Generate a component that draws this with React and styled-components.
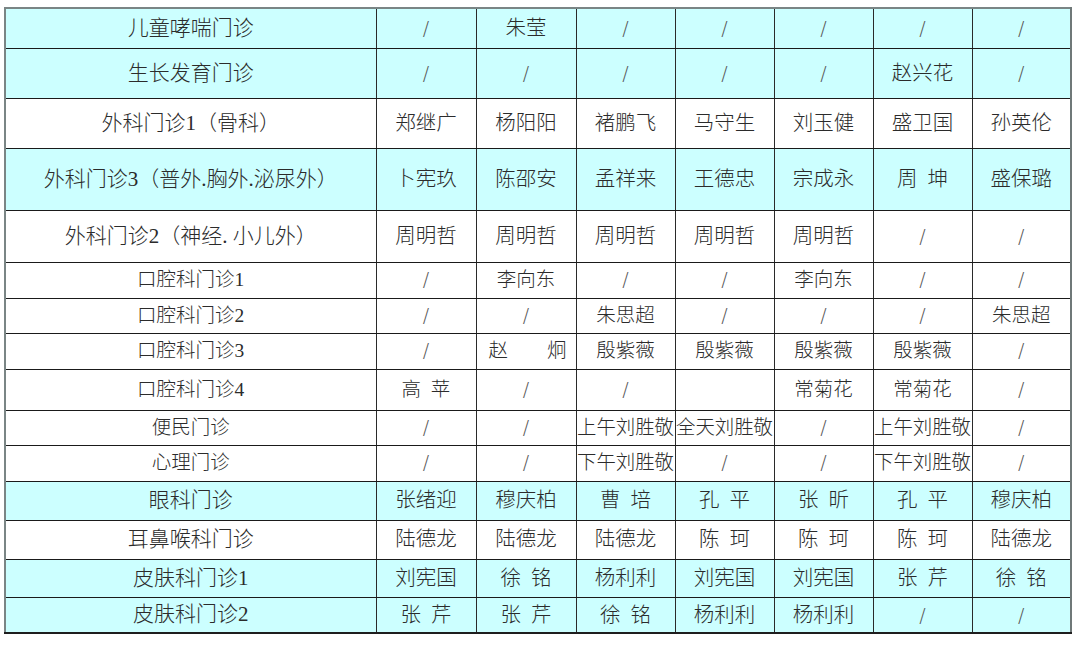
import React from "react";
import styled, { createGlobalStyle } from "styled-components";

const Global = createGlobalStyle`
  html, body { margin: 0; padding: 0; background: #ffffff; }
  body { font-family: "Liberation Serif", "Noto Sans CJK SC", serif; }
`;

const Page = styled.div`
  padding: 7px 0 0 4px;
`;

const Table = styled.table`
  border-collapse: collapse;
  table-layout: fixed;
  width: 1066px;
  border-top: 2px solid #7a8585;
  border-left: 2px solid #7a8585;
  border-right: 2px solid #6f7878;
  border-bottom: 2px solid #1e1e1e;
`;

const Row = styled.tr`
  height: ${(p) => p.$h}px;
  background: ${(p) => (p.$cyan ? "#ccffff" : "#ffffff")};
`;

const Cell = styled.td`
  padding: 0;
  border-top: 1px solid #1a1a1a;
  border-bottom: 1px solid #1a1a1a;
  border-left: 1px solid #2a2a2a;
  border-right: 1px solid #2a2a2a;
  text-align: center;
  vertical-align: middle;
  white-space: nowrap;
  overflow: visible;
  color: #2b2b2b;
  font-family: "Liberation Serif", "Noto Sans CJK SC", serif;
  font-size: ${(p) => p.$size}px;
  font-weight: 300;
  line-height: 1;
`;

const Slash = styled.span`
  font-family: "DejaVu Sans", "Liberation Sans", sans-serif;
  font-weight: 200;
  font-size: 19px;
  color: #555;
`;

const Spread = styled.span`
  display: flex;
  justify-content: space-between;
  padding: 0 9px 0 12px;
`;

const cols = [371, 100, 100, 99, 99, 99, 99, 99];

const rows = [
  { h: 40, c: true, name: "儿童哮喘门诊", v: ["/", "朱莹", "/", "/", "/", "/", "/"] },
  { h: 50, c: true, name: "生长发育门诊", v: ["/", "/", "/", "/", "/", "赵兴花", "/"] },
  { h: 50, c: false, name: "外科门诊1（骨科）", v: ["郑继广", "杨阳阳", "褚鹏飞", "马守生", "刘玉健", "盛卫国", "孙英伦"] },
  { h: 62, c: true, name: "外科门诊3（普外.胸外.泌尿外）", v: ["卜宪玖", "陈邵安", "孟祥来", "王德忠", "宗成永", "周\u2002坤", "盛保璐"] },
  { h: 52, c: false, name: "外科门诊2（神经. 小儿外）", v: ["周明哲", "周明哲", "周明哲", "周明哲", "周明哲", "/", "/"] },
  { h: 36, c: false, s: true, name: "口腔科门诊1", v: ["/", "李向东", "/", "/", "李向东", "/", "/"] },
  { h: 35, c: false, s: true, name: "口腔科门诊2", v: ["/", "/", "朱思超", "/", "/", "/", "朱思超"] },
  { h: 36, c: false, s: true, name: "口腔科门诊3", v: ["/", ["赵", "炯"], "殷紫薇", "殷紫薇", "殷紫薇", "殷紫薇", "/"] },
  { h: 41, c: false, s: true, name: "口腔科门诊4", v: ["高\u2002苹", "/", "/", "", "常菊花", "常菊花", "/"] },
  { h: 35, c: false, s: true, name: "便民门诊", v: ["/", "/", "上午刘胜敬", "全天刘胜敬", "/", "上午刘胜敬", "/"] },
  { h: 36, c: false, s: true, name: "心理门诊", v: ["/", "/", "下午刘胜敬", "/", "/", "下午刘胜敬", "/"] },
  { h: 39, c: true, name: "眼科门诊", v: ["张绪迎", "穆庆柏", "曹\u2002培", "孔\u2002平", "张\u2002昕", "孔\u2002平", "穆庆柏"] },
  { h: 39, c: false, name: "耳鼻喉科门诊", v: ["陆德龙", "陆德龙", "陆德龙", "陈\u2002珂", "陈\u2002珂", "陈\u2002珂", "陆德龙"] },
  { h: 38, c: true, name: "皮肤科门诊1", v: ["刘宪国", "徐\u2002铭", "杨利利", "刘宪国", "刘宪国", "张\u2002芹", "徐\u2002铭"] },
  { h: 36, c: true, name: "皮肤科门诊2", v: ["张\u2002芹", "张\u2002芹", "徐\u2002铭", "杨利利", "杨利利", "/", "/"] },
];

function Value({ v }) {
  if (Array.isArray(v)) {
    return (
      <Spread>
        <span>{v[0]}</span>
        <span>{v[1]}</span>
      </Spread>
    );
  }
  if (v === "/") return <Slash>/</Slash>;
  return v;
}

function sizeFor(v, small) {
  if (typeof v === "string" && v.length > 4) return 19.4;
  return small ? 19.5 : 20.5;
}

export default function App() {
  return (
    <>
      <Global />
      <Page>
        <Table>
          <colgroup>
            {cols.map((w, i) => (
              <col key={i} style={{ width: w }} />
            ))}
          </colgroup>
          <tbody>
            {rows.map((r, i) => (
              <Row key={i} $h={r.h} $cyan={r.c}>
                <Cell $size={r.s ? 19.5 : 21}>{r.name}</Cell>
                {r.v.map((v, j) => (
                  <Cell key={j} $size={sizeFor(v, r.s)}>
                    <Value v={v} />
                  </Cell>
                ))}
              </Row>
            ))}
          </tbody>
        </Table>
      </Page>
    </>
  );
}
